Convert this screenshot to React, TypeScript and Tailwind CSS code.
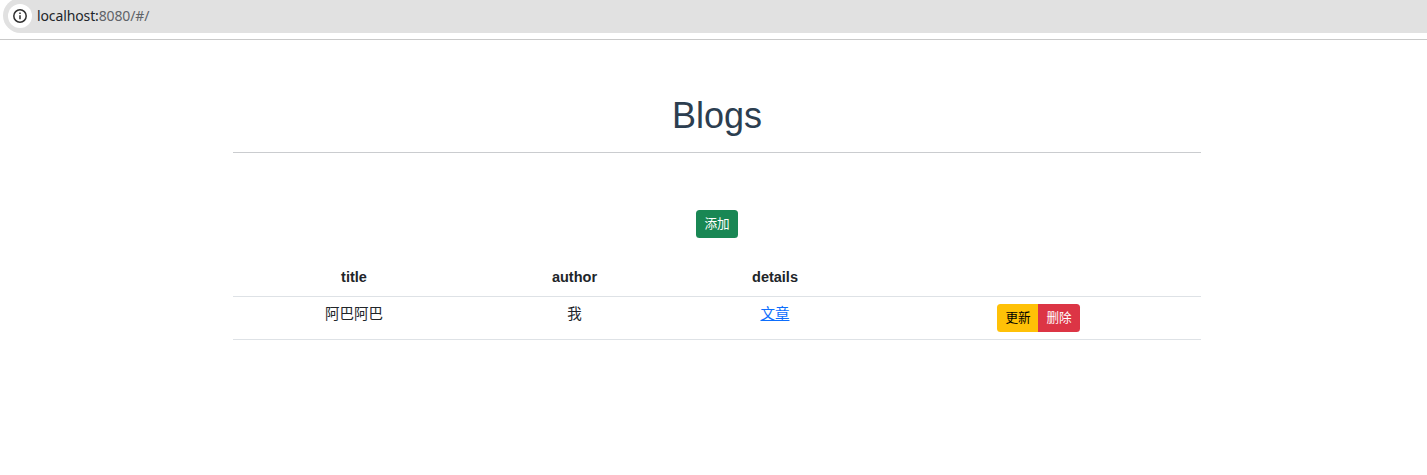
export default function App() {
  return (
    <div className="h-[475px] overflow-hidden bg-white font-['Liberation_Sans','Noto_Sans_CJK_SC',sans-serif] text-[14.5px] text-[#212529]">
      <div className="h-10 overflow-hidden border-b border-[#c9c9c9]">
        <div className="-mt-[2px] ml-[3px] flex h-[35px] items-center rounded-l-full bg-[#e1e1e1] pl-[5px] font-['Noto_Sans',sans-serif] text-[14px] tracking-[-0.12px]">
          <span className="mt-px flex size-6 items-center justify-center rounded-full bg-white">
            <svg width="16" height="16" viewBox="0 0 16 16" fill="none" stroke="#303030" strokeWidth="1.5">
              <circle cx="8" cy="8" r="6.2" />
              <path d="M8 7.2v4M8 4.5v1.5" />
            </svg>
          </span>
          <span className="ml-[5px]">localhost:<span className="text-[#5f6368]">8080/#/</span></span>
        </div>
      </div>
      <main className="ml-[233px] flex w-[968px] flex-col items-center pt-[54px]">
        <h1 className="text-[36px] leading-[43px] text-[#2c3e50]">Blogs</h1>
        <hr className="mt-[15px] w-full border-[#cacccf]" />
        <button className="mt-[57px] h-7 w-[42px] rounded-[3.5px] bg-[#198754] text-[12.6px] text-white">添加</button>
        <table className="mt-5 w-full table-fixed border-collapse text-center">
          <colgroup><col className="w-[242px]" /><col className="w-[199px]" /><col className="w-[202px]" /><col /></colgroup>
          <thead>
            <tr className="h-[38px] border-b border-[#dee2e6]">
              <th className="pt-[3px]">title</th><th className="pt-[3px]">author</th><th className="pt-[3px]">details</th><th />
            </tr>
          </thead>
          <tbody>
            <tr className="h-[43px] border-b border-[#dee2e6] align-top">
              <td className="pt-[7px]">阿巴阿巴</td><td className="pt-[7px]">我</td>
              <td className="pt-[7px]"><a href="#" className="text-[#0d6efd] underline">文章</a></td>
              <td className="pt-[7px]"><div className="flex justify-center text-[12.6px]">
                <button className="h-7 w-[41px] rounded-l-[3.5px] bg-[#ffc107] pt-px pl-px text-black">更新</button>
                <button className="h-7 w-[42px] rounded-r-[3.5px] bg-[#dc3545] pt-px text-white">删除</button>
              </div></td>
            </tr>
          </tbody>
        </table>
      </main>
    </div>
  );
}
